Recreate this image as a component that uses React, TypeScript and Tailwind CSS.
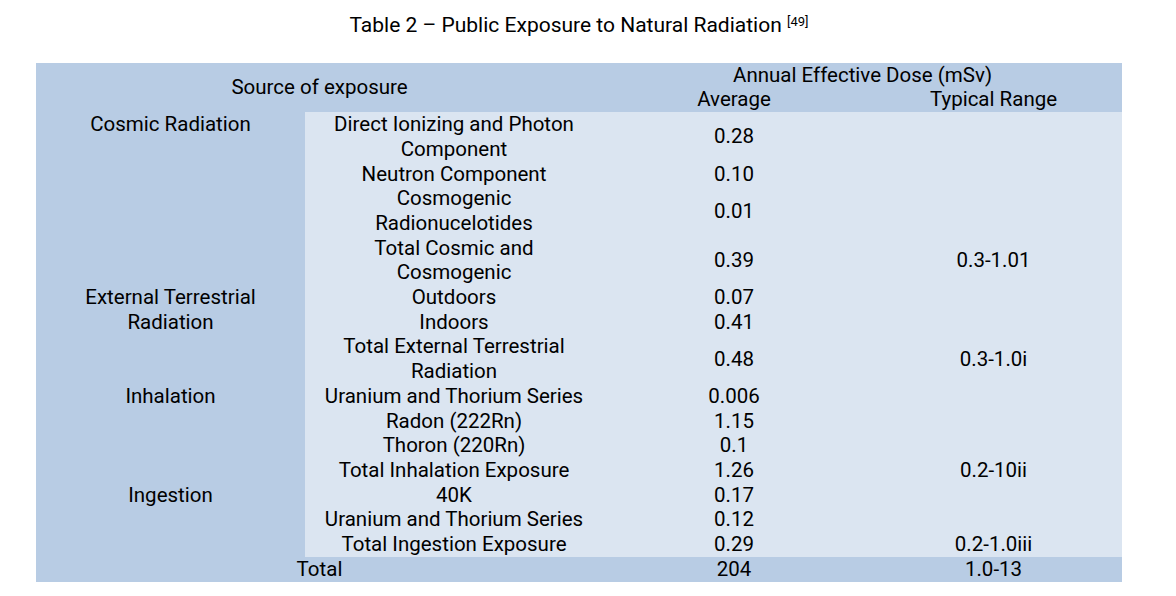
import type { ReactNode } from 'react';

interface Row {
  source?: { label: ReactNode; span: number };
  item: ReactNode;
  avg: string;
  range?: string;
}

const rows: Row[] = [
  { source: { label: 'Cosmic Radiation', span: 4 }, item: <>Direct Ionizing and Photon<br />Component</>, avg: '0.28' },
  { item: 'Neutron Component', avg: '0.10' },
  { item: <>Cosmogenic<br />Radionucelotides</>, avg: '0.01' },
  { item: <>Total Cosmic and<br />Cosmogenic</>, avg: '0.39', range: '0.3-1.01' },
  { source: { label: <>External Terrestrial<br />Radiation</>, span: 3 }, item: 'Outdoors', avg: '0.07' },
  { item: 'Indoors', avg: '0.41' },
  { item: <>Total External Terrestrial<br />Radiation</>, avg: '0.48', range: '0.3-1.0i' },
  { source: { label: 'Inhalation', span: 4 }, item: 'Uranium and Thorium Series', avg: '0.006' },
  { item: 'Radon (222Rn)', avg: '1.15' },
  { item: 'Thoron (220Rn)', avg: '0.1' },
  { item: 'Total Inhalation Exposure', avg: '1.26', range: '0.2-10ii' },
  { source: { label: 'Ingestion', span: 3 }, item: '40K', avg: '0.17' },
  { item: 'Uranium and Thorium Series', avg: '0.12' },
  { item: 'Total Ingestion Exposure', avg: '0.29', range: '0.2-1.0iii' },
];

export default function App() {
  return (
    <div className="min-h-screen bg-white text-black font-['Roboto',sans-serif] text-[20.5px] leading-[24.7px]">
      <div className="ml-[36px] w-[1086px] pt-[13px]">
        <h1 className="text-center text-[21px] font-normal">
          Table 2 – Public Exposure to Natural Radiation{' '}
          <sup className="text-[13px]">[49]</sup>
        </h1>

        <table className="mt-[25px] w-full table-fixed border-collapse text-center">
          <colgroup>
            <col className="w-[269px]" />
            <col className="w-[298px]" />
            <col className="w-[262px]" />
            <col className="w-[257px]" />
          </colgroup>
          <thead className="bg-[#b8cce4]">
            <tr>
              <th colSpan={2} rowSpan={2} className="p-0 font-normal align-middle">
                Source of exposure
              </th>
              <th colSpan={2} className="p-0 font-normal">
                Annual Effective Dose (mSv)
              </th>
            </tr>
            <tr>
              <th className="p-0 font-normal">Average</th>
              <th className="p-0 font-normal">Typical Range</th>
            </tr>
          </thead>
          <tbody>
            {rows.map((row, i) => (
              <tr key={i}>
                {row.source && (
                  <td rowSpan={row.source.span} className="bg-[#b8cce4] px-2 py-0 align-top">
                    {row.source.label}
                  </td>
                )}
                <td className="bg-[#dbe5f1] px-2 py-0 align-middle">{row.item}</td>
                <td className="bg-[#dbe5f1] px-2 py-0 align-middle">{row.avg}</td>
                <td className="bg-[#dbe5f1] px-2 py-0 align-middle">{row.range ?? ''}</td>
              </tr>
            ))}
            <tr className="bg-[#b8cce4]">
              <td colSpan={2} className="h-[25px] p-0">Total</td>
              <td className="p-0">204</td>
              <td className="p-0">1.0-13</td>
            </tr>
          </tbody>
        </table>
      </div>
    </div>
  );
}
